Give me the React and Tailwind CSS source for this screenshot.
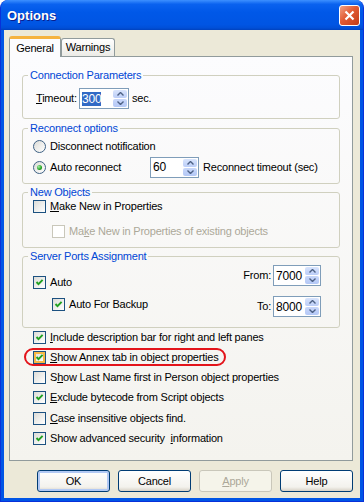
import React from 'react';

const Check = ({ checked, disabled, hot }) => (
  <span
    className={`w-[13px] h-[13px] shrink-0 border flex items-center justify-center ${
      disabled
        ? 'border-[#C9C7BA] bg-white'
        : 'border-[#1C5180] bg-[linear-gradient(135deg,#DCDCD7,#FFFFFF)]'
    } ${hot ? 'shadow-[inset_0_0_0_2px_#F8B945]' : ''}`}
  >
    {checked && (
      <svg width="9" height="9" viewBox="0 0 9 9">
        <path d="M1.5 4 L3.5 6.2 L7.6 1.8" fill="none" stroke="#21A121" strokeWidth="1.9" />
      </svg>
    )}
  </span>
);

const Radio = ({ checked }) => (
  <span className="w-[13px] h-[13px] shrink-0 rounded-full border border-[#3E6184] bg-[linear-gradient(135deg,#DCDCD7,#FFFFFF)] flex items-center justify-center">
    {checked && (
      <span className="w-[5px] h-[5px] rounded-full bg-[radial-gradient(circle_at_35%_35%,#A8F0A8,#21A121_60%,#178017)]" />
    )}
  </span>
);

const Arrow = ({ down }) => (
  <svg width="7" height="4" viewBox="0 0 7 4">
    <path d={down ? 'M0.5 0.5 L3.5 3.5 L6.5 0.5' : 'M0.5 3.5 L3.5 0.5 L6.5 3.5'} fill="none" stroke="#4D6185" strokeWidth="1.4" />
  </svg>
);

const Spin = ({ value, selected, w = 'w-[49px]' }) => (
  <div className={`${w} h-[21px] shrink-0 border border-[#7F9DB9] bg-white flex`}>
    <div className="flex-1 flex items-center pl-[2px]">
      <span className={`text-[12px] leading-[14px] ${selected ? 'bg-[#316AC5] text-white' : ''}`}>{value}</span>
    </div>
    <div className="w-[16px] flex flex-col gap-[1px] p-[1px]">
      <div className="flex-1 rounded-[2px] bg-[linear-gradient(to_bottom,#D8E4FC,#BCCEF8)] flex items-center justify-center">
        <Arrow />
      </div>
      <div className="flex-1 rounded-[2px] bg-[linear-gradient(to_bottom,#C8D7FA,#B4C8F6)] flex items-center justify-center">
        <Arrow down />
      </div>
    </div>
  </div>
);

const Group = ({ title, h, mt, children }) => (
  <fieldset className={`${h} ${mt} border border-[#D0D0BF] rounded-[3px]`}>
    <legend className="ml-[5px] px-[2px] text-[#0046D5] leading-[13px]">{title}</legend>
    {children}
  </fieldset>
);

const Btn = ({ children, def, disabled }) => (
  <div
    className={`w-[73px] h-[22px] rounded-[3px] border flex items-center justify-center ${
      disabled
        ? 'border-[#C9C7BA] text-[#ACA899] bg-[#F5F4EA]'
        : 'border-[#003C74] bg-[linear-gradient(to_bottom,#FFFFFF,#F3F2ED_80%,#D8D2C6)]'
    } ${def ? 'shadow-[inset_0_0_0_2px_#B2C9F4]' : ''}`}
  >
    {children}
  </div>
);

export default function App() {
  return (
    <div className="w-[364px] h-[502px] bg-white font-['Liberation_Sans',Arial,sans-serif] text-[11px] leading-[13px] tracking-[-0.2px] text-black">
      <div className="w-full h-full rounded-t-[8px] overflow-hidden bg-[#0055E5] border border-t-0 border-[#0831D9] flex flex-col">
        {/* title bar */}
        <div className="h-[30px] shrink-0 flex items-center justify-between pl-[6px] pr-[3px] bg-[linear-gradient(to_bottom,#3D90FF_0%,#0A62EF_14%,#0058E8_40%,#0055E3_82%,#004FD8_93%,#0042BE_100%)]">
          <span className="text-white font-bold text-[13px] tracking-normal [text-shadow:1px_1px_0_#0A1E8C]">Options</span>
          <div className="w-[21px] h-[21px] rounded-[3px] border border-white bg-[linear-gradient(135deg,#F2A285,#E15A33_45%,#C33C16)] flex items-center justify-center">
            <svg width="11" height="11" viewBox="0 0 11 11">
              <path d="M1.5 1.5 L9.5 9.5 M9.5 1.5 L1.5 9.5" stroke="white" strokeWidth="2.2" />
            </svg>
          </div>
        </div>

        {/* body */}
        <div className="flex-1 mx-[3px] mb-[3px] bg-[#ECE9D8] flex flex-col pl-[5px] pr-[7px]">
          {/* tabs */}
          <div className="mt-[6px] h-[20px] flex items-end">
            <div className="relative z-10 w-[52px] h-[21px] mb-[-1px] rounded-t-[3px] border-x border-[#919B9C] border-t-[3px] border-t-[#F5B33F] bg-[#FCFCFE] flex items-center justify-center">
              General
            </div>
            <div className="w-[54px] h-[18px] rounded-t-[3px] border border-b-0 border-[#919B9C] bg-[linear-gradient(to_bottom,#FFFFFF,#ECEBE6)] flex items-center justify-center">
              Warnings
            </div>
          </div>

          {/* tab panel */}
          <div className="h-[405px] border border-[#919B9C] bg-[linear-gradient(to_bottom,#FCFCFE,#F4F3EE)] pt-[12px] px-[12px] flex flex-col">
            <Group title="Connection Parameters" h="h-[50px]" mt="">
              <div className="mt-[6px] pl-[13px] flex items-center">
                <span className="w-[43px]">
                  <u>T</u>imeout:
                </span>
                <Spin value="300" selected w="w-[50px]" />
                <span className="ml-[3px]">sec.</span>
              </div>
            </Group>

            <Group title="Reconnect options" h="h-[62px]" mt="mt-[3px]">
              <div className="pl-[10px] flex flex-col">
                <div className="mt-[1px] h-[20px] flex items-center gap-[4px]">
                  <Radio />
                  <span>Disconnect notification</span>
                </div>
                <div className="h-[22px] flex items-center">
                  <div className="w-[117px] flex items-center gap-[4px]">
                    <Radio checked />
                    <span>Auto reconnect</span>
                  </div>
                  <Spin value="60" />
                  <span className="ml-[4px]">Reconnect timeout (sec)</span>
                </div>
              </div>
            </Group>

            <Group title="New Objects" h="h-[62px]" mt="mt-[2px]">
              <div className="pl-[10px] flex flex-col">
                <div className="h-[14px] flex items-center gap-[4px]">
                  <Check />
                  <span>
                    <u>M</u>ake New in Properties
                  </span>
                </div>
                <div className="mt-[8px] h-[20px] pl-[19px] flex items-center gap-[4px] text-[#ACA899]">
                  <Check disabled />
                  <span>
                    Ma<u>k</u>e New in Properties of existing objects
                  </span>
                </div>
              </div>
            </Group>

            <Group title="Server Ports Assignment" h="h-[78px]" mt="mt-[2px]">
              <div className="flex justify-between">
                <div className="pl-[10px] flex flex-col">
                  <div className="mt-[9px] h-[20px] flex items-center gap-[4px]">
                    <Check checked />
                    <span>Auto</span>
                  </div>
                  <div className="mt-[2px] h-[20px] pl-[19px] flex items-center gap-[4px]">
                    <Check checked />
                    <span>Auto For Backup</span>
                  </div>
                </div>
                <div className="pr-[18px] flex flex-col items-end">
                  <div className="mt-[2px] flex items-center gap-[2px]">
                    <span>From:</span>
                    <Spin value="7000" w="w-[48px]" />
                  </div>
                  <div className="mt-[10px] flex items-center gap-[2px]">
                    <span>To:</span>
                    <Spin value="8000" w="w-[48px]" />
                  </div>
                </div>
              </div>
            </Group>

            <div className="mt-[1px] pl-[11px] flex flex-col gap-[4.3px]">
              <div className="h-[16px] flex items-center gap-[4px]">
                <Check checked />
                <span>
                  <u>I</u>nclude description bar for right and left panes
                </span>
              </div>
              <div className="relative h-[16px] flex items-center gap-[4px]">
                <Check checked hot />
                <span>
                  <u>S</u>how Annex tab in object properties
                </span>
                <div className="absolute left-[-9px] top-[-1px] w-[202px] h-[18px] rounded-full border-2 border-[#E3141B]" />
              </div>
              <div className="h-[16px] flex items-center gap-[4px]">
                <Check />
                <span>
                  S<u>h</u>ow Last Name first in Person object properties
                </span>
              </div>
              <div className="h-[16px] flex items-center gap-[4px]">
                <Check checked />
                <span>
                  <u>E</u>xclude bytecode from Script objects
                </span>
              </div>
              <div className="h-[16px] flex items-center gap-[4px]">
                <Check />
                <span>
                  <u>C</u>ase insensitive objects find.
                </span>
              </div>
              <div className="h-[16px] flex items-center gap-[4px]">
                <Check checked />
                <span>
                  Show advanced security{'\u00a0'} <u>i</u>nformation
                </span>
              </div>
            </div>
          </div>

          {/* buttons */}
          <div className="mt-[9px] flex justify-end gap-[8px]">
            <Btn def>OK</Btn>
            <Btn>Cancel</Btn>
            <Btn disabled>
              <span>
                <u>A</u>pply
              </span>
            </Btn>
            <Btn>Help</Btn>
          </div>
        </div>
      </div>
    </div>
  );
}
